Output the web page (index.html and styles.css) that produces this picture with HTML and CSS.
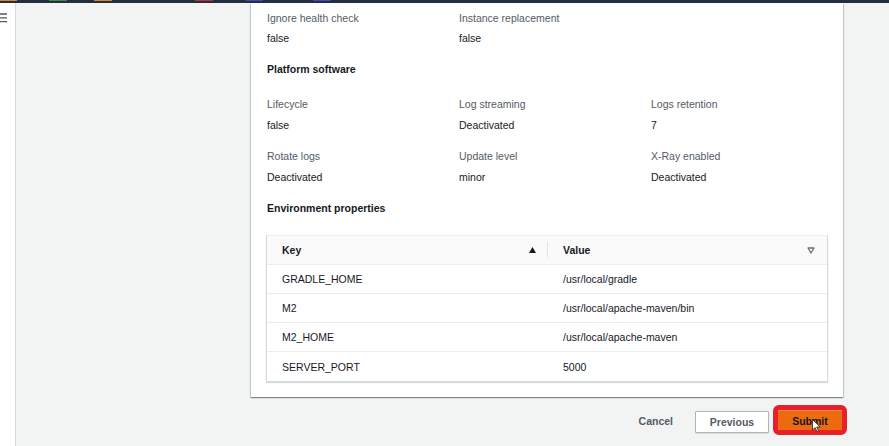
FILE: index.html
```html
<!DOCTYPE html>
<html>
<head>
<meta charset="utf-8">
<link rel="stylesheet" href="styles.css">
</head>
<body>
<div class="topbar">
  <span class="blip orange" style="margin-left:0;width:17px"></span>
  <span class="blip green" style="margin-left:32px;width:18px"></span>
  <span class="blip orange" style="margin-left:27px;width:18px"></span>
  <span class="blip red" style="margin-left:83px;width:18px"></span>
  <span class="blip blue" style="margin-left:33px;width:17px"></span>
  <span class="blip blue" style="margin-left:50px;width:18px"></span>
</div>
<div class="app">
  <aside class="sidebar">
    <svg class="menu" width="7" height="10" viewBox="0 0 7 10"><path d="M0 1h7M0 4.8h7M0 8.6h7" stroke="#545b64" stroke-width="1.3"/></svg>
  </aside>
  <main class="main">
    <section class="card">
      <div class="kv-grid">
        <div class="kv"><div class="label">Ignore health check</div><div class="value">false</div></div>
        <div class="kv"><div class="label">Instance replacement</div><div class="value">false</div></div>
      </div>
      <h3 class="heading h-platform">Platform software</h3>
      <div class="kv-grid grid-2">
        <div class="kv"><div class="label">Lifecycle</div><div class="value">false</div></div>
        <div class="kv"><div class="label">Log streaming</div><div class="value">Deactivated</div></div>
        <div class="kv"><div class="label">Logs retention</div><div class="value">7</div></div>
        <div class="kv"><div class="label">Rotate logs</div><div class="value">Deactivated</div></div>
        <div class="kv"><div class="label">Update level</div><div class="value">minor</div></div>
        <div class="kv"><div class="label">X-Ray enabled</div><div class="value">Deactivated</div></div>
      </div>
      <h3 class="heading h-env">Environment properties</h3>
      <div class="table">
        <div class="thead">
          <div class="th th-key">
            <span>Key</span>
            <svg class="sort" width="7" height="6" viewBox="0 0 7 6"><path d="M3.5 0L7 6H0z" fill="#16191f"/></svg>
          </div>
          <div class="th th-val">
            <span>Value</span>
            <svg class="filter" width="8" height="7" viewBox="0 0 8 7"><path d="M1 1h6L4 6z" fill="none" stroke="#687078" stroke-width="1.3" stroke-linejoin="round"/></svg>
          </div>
        </div>
        <div class="tr"><div class="td td-key">GRADLE_HOME</div><div class="td td-val">/usr/local/gradle</div></div>
        <div class="tr"><div class="td td-key">M2</div><div class="td td-val">/usr/local/apache-maven/bin</div></div>
        <div class="tr"><div class="td td-key">M2_HOME</div><div class="td td-val">/usr/local/apache-maven</div></div>
        <div class="tr"><div class="td td-key">SERVER_PORT</div><div class="td td-val">5000</div></div>
      </div>
    </section>
    <div class="actions">
      <button class="btn btn-link">Cancel</button>
      <button class="btn btn-normal">Previous</button>
      <button class="btn btn-primary">Submit
        <svg class="cursor" width="9" height="13" viewBox="0 0 9 13"><path d="M0.5 0.5v10.5l2.6-2.4 1.8 3.9 1.6-0.7-1.8-3.8h3.5z" fill="#fff" stroke="#222" stroke-width="0.8"/></svg>
      </button>
    </div>
  </main>
</div>
</body>
</html>
```
FILE: styles.css
```css
* { box-sizing: border-box; }
html, body { margin: 0; padding: 0; }
body {
  width: 889px;
  height: 446px;
  overflow: hidden;
  background: #f2f3f3;
  font-family: "Liberation Sans", Arial, sans-serif;
  font-size: 10.5px;
  color: #16191f;
}
.topbar {
  height: 3px;
  background: #232f3e;
  display: flex;
  align-items: flex-start;
}
.blip { height: 1px; display: block; flex: none; }
.blip.orange { background: #d9822b; }
.blip.green { background: #3f8f3a; }
.blip.red { background: #c32b2f; }
.blip.blue { background: #3a4cc0; }

.app {
  display: flex;
  height: 443px;
}
.sidebar {
  width: 16px;
  flex: none;
  background: #ffffff;
  border-right: 1px solid #d5dbdb;
  padding-top: 10px;
}
.menu { display: block; }
.main {
  flex: 1;
  padding-left: 235px;
  display: flex;
  flex-direction: column;
}
.card {
  width: 592px;
  background: #ffffff;
  padding: 5px 15px 15px 15px;
  box-shadow: 0 1px 1px 0 rgba(0,28,36,0.3), 1px 1px 1px 0 rgba(0,28,36,0.15), -1px 1px 1px 0 rgba(0,28,36,0.15);
}
.kv-grid {
  display: grid;
  grid-template-columns: 192px 192px 192px;
  row-gap: 12px;
  padding-left: 1px;
}
.kv .label, .kv .value { line-height: 20px; }
.grid-2 { row-gap: 11px; }
.grid-2 .kv .value { margin-top: 1px; }
.label { color: #545b64; }
.value { color: #16191f; }
.heading {
  margin: 0;
  font-size: 10.5px;
  font-weight: bold;
  line-height: 20px;
  padding-left: 1px;
}
.h-platform { margin-top: 11px; margin-bottom: 15px; }
.h-env { margin-top: 11px; margin-bottom: 17px; }

.table {
  border: 1px solid #d5dbdb;
  border-top-color: #eaeded;
  box-shadow: 0 1px 1px rgba(0,28,36,0.15);
}
.thead {
  display: flex;
  height: 29px;
  background: #fafafa;
  border-bottom: 1px solid #eaeded;
}
.th {
  display: flex;
  align-items: center;
  justify-content: space-between;
  font-weight: bold;
  color: #16191f;
}
.th-key {
  width: 281px;
  padding-left: 15px;
  padding-right: 12px;
  position: relative;
}
.th-key::after {
  content: "";
  position: absolute;
  right: 0;
  top: 6px;
  bottom: 7px;
  width: 1px;
  background: #e1e4e4;
}
.th-val {
  flex: 1;
  padding-left: 15px;
  padding-right: 12px;
}
.sort, .filter { display: block; }
.tr {
  display: flex;
  height: 29px;
  align-items: center;
  border-bottom: 1px solid #eaeded;
}
.tr:last-child { border-bottom: none; }
.td { color: #16191f; }
.td-key { width: 281px; padding-left: 15px; }
.td-val { flex: 1; padding-left: 15px; }

.actions {
  width: 592px;
  display: flex;
  justify-content: flex-end;
  align-items: flex-start;
  margin-top: 13px;
}
.btn {
  font-family: "Liberation Sans", Arial, sans-serif;
  font-size: 10.5px;
  font-weight: bold;
  border-radius: 1px;
  cursor: pointer;
}
.btn-link {
  background: none;
  border: none;
  color: #545b64;
  padding: 0;
  line-height: 12px;
  margin-top: 5px;
  margin-right: 22px;
}
.btn-normal {
  width: 74px;
  height: 22px;
  padding: 0;
  line-height: 20px;
  background: #ffffff;
  border: 1px solid #aab7b8;
  color: #545b64;
  margin-top: 1px;
  box-shadow: 0 1px 1px rgba(0,0,0,0.1);
}
.btn-primary {
  position: relative;
  width: 64px;
  height: 20px;
  padding: 0;
  margin-left: 9px;
  margin-right: 1px;
  background: #ec6b10;
  border: none;
  border-top: 1px solid #f08c45;
  color: #16191f;
  outline: 5px solid #e8202a;
}
.cursor {
  position: absolute;
  left: 34px;
  top: 8px;
}
```
